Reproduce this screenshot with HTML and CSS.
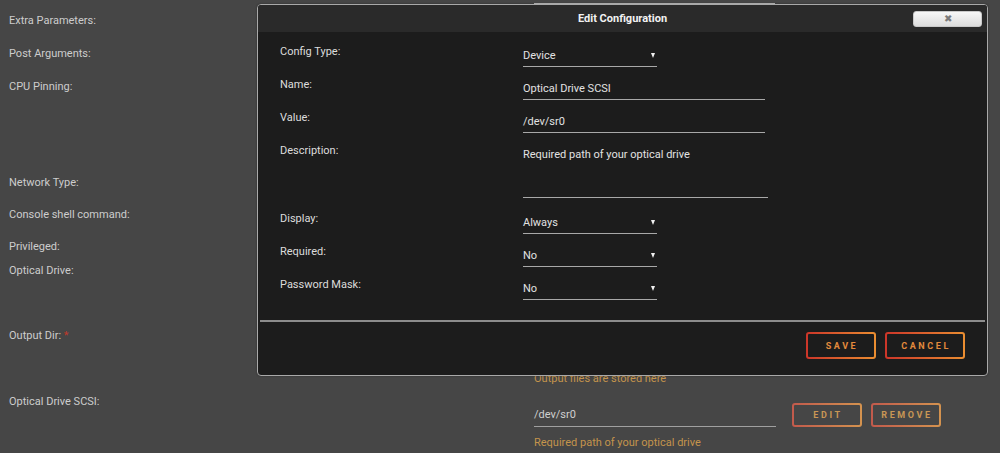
FILE: index.html
```html
<!DOCTYPE html>
<html lang="en">
<head>
  <meta charset="UTF-8" />
  <title>Edit Configuration</title>
  <link rel="stylesheet" href="styles.css">
</head>
<body>

  <div class="page">
    <div class="row row-stub"><span></span><div class="stub-line"></div></div>
    <div class="row"><label>Extra Parameters:</label></div>
    <div class="row"><label>Post Arguments:</label></div>
    <div class="row row-cpu"><label>CPU Pinning:</label></div>
    <div class="row row-32"><label>Network Type:</label></div>
    <div class="row row-32"><label>Console shell command:</label></div>
    <div class="row row-24"><label>Privileged:</label></div>
    <div class="row row-65"><label>Optical Drive:</label></div>
    <div class="row row-66">
      <label>Output Dir: <span class="req">*</span></label>
      <div class="value">
        <div class="hint hint-out">Output files are stored here</div>
      </div>
    </div>
    <div class="row">
      <label>Optical Drive SCSI:</label>
      <div class="value">
        <div class="inline">
          <div class="bg-input">/dev/sr0</div>
          <button class="btn btn-dim">EDIT</button>
          <button class="btn btn-dim">REMOVE</button>
        </div>
        <div class="hint">Required path of your optical drive</div>
      </div>
    </div>
  </div>

  <!-- dialog -->
  <div class="modal">
    <div class="modal-head">
      <span></span>
      <div class="modal-title">Edit Configuration</div>
      <button class="close-btn">&#x2716;</button>
    </div>

    <div class="modal-body">
      <div class="mrow">
        <label>Config Type:</label>
        <div class="field select w-134">Device</div>
      </div>
      <div class="mrow">
        <label>Name:</label>
        <div class="field w-242">Optical Drive SCSI</div>
      </div>
      <div class="mrow">
        <label>Value:</label>
        <div class="field w-242">/dev/sr0</div>
      </div>
      <div class="mrow mrow-desc">
        <label>Description:</label>
        <div class="field area w-245">Required path of your optical drive</div>
      </div>
      <div class="mrow">
        <label>Display:</label>
        <div class="field select w-134">Always</div>
      </div>
      <div class="mrow">
        <label>Required:</label>
        <div class="field select w-134">No</div>
      </div>
      <div class="mrow">
        <label>Password Mask:</label>
        <div class="field select w-134">No</div>
      </div>
    </div>

    <div class="modal-foot">
      <button class="btn btn-save">SAVE</button>
      <button class="btn btn-cancel">CANCEL</button>
    </div>
  </div>

</body>
</html>
```

FILE: styles.css
```css
:root {
  --font-sans: Roboto, 'Liberation Sans', sans-serif;
  --page-bg: #464646;
  --label: #cdcdcd;
  --hint: #c4944c;
  --modal-bg: #1c1c1c;
  --modal-head: #2a2a2a;
  --modal-text: #e2e2e2;
  --line: #a8a8a8;
}

body {
  margin: 0;
  font-family: var(--font-sans);
  font-size: 11px;
  background-color: var(--page-bg);
  color: var(--label);
  height: 453px;
  overflow: hidden;
}

/* page behind the dialog */
.page {
  padding-left: 9px;
}

.row {
  display: grid;
  grid-template-columns: 525px 1fr;
  height: 33px;
}

.row label {
  line-height: 20px;
  padding-top: 1px;
}

.row-stub { height: 10px; }
.row-cpu { height: 96px; }
.row-32 { height: 32px; }
.row-24 { height: 24px; }
.row-65 { height: 65px; }
.row-66 { height: 66px; }

.stub-line {
  width: 241px;
  margin-top: 3px;
  border-top: 1px solid #bdbdbd;
  height: 0;
}

.req {
  color: #c0392b;
}

.hint {
  color: var(--hint);
  line-height: 20px;
  margin-top: 6px;
}

.hint-out {
  margin-top: 44px;
}

.inline {
  display: flex;
  align-items: flex-start;
  margin-top: 11px;
}

.bg-input {
  width: 242px;
  height: 24px;
  line-height: 25px;
  border-bottom: 1px solid #a0a0a0;
  color: #d0d0d0;
  margin-right: 16px;
}

.btn {
  font-family: var(--font-sans);
  font-weight: bold;
  font-size: 9px;
  letter-spacing: 2.6px;
  padding: 0 0 0 2px;
  border: 2px solid transparent;
  border-radius: 3px;
  cursor: pointer;
}

.btn-dim {
  width: 70px;
  height: 24px;
  margin-top: 1px;
  margin-right: 9px;
  color: #c99755;
  background:
    linear-gradient(var(--page-bg), var(--page-bg)) padding-box,
    linear-gradient(90deg, #c25a4c, #d4934f) border-box;
}

/* dialog */
.modal {
  position: absolute;
  left: 257px;
  top: 4px;
  width: 729px;
  height: 370px;
  border: 1px solid #a9a9a9;
  border-radius: 4px;
  background-color: var(--modal-bg);
  color: var(--modal-text);
  box-shadow: 0 0 2px rgba(0, 0, 0, 0.4);
}

.modal-head {
  height: 27px;
  background-color: var(--modal-head);
  border-radius: 3px 3px 0 0;
  display: grid;
  grid-template-columns: 1fr auto 1fr;
  align-items: center;
}

.modal-title {
  font-weight: bold;
  color: #f2f2f2;
}

.close-btn {
  justify-self: end;
  margin-right: 5px;
  width: 69px;
  height: 16px;
  padding: 0;
  border: 1px solid #c9c9c9;
  border-radius: 3px;
  background: linear-gradient(#f7f7f7, #dcdcdc);
  color: #7a7a7a;
  font-size: 10px;
  line-height: 14px;
  cursor: pointer;
}

.modal-body {
  padding: 8px 0 0 20px;
  height: 280px;
  border-bottom: 2px solid #8c8c8c;
  margin: 0 2px;
}

.mrow {
  display: grid;
  grid-template-columns: 243px 1fr;
  height: 33px;
}

.mrow-desc {
  height: 68px;
}

.mrow label {
  line-height: 20px;
  padding-top: 2px;
  color: #dcdcdc;
}

.field {
  margin-top: 5px;
  height: 21px;
  line-height: 22px;
  border-bottom: 1px solid var(--line);
  color: var(--modal-text);
  position: relative;
}

.area {
  height: 53px;
}

.w-134 { width: 134px; }
.w-242 { width: 242px; }
.w-245 { width: 245px; }

.select::after {
  content: '';
  position: absolute;
  right: 2px;
  top: 8px;
  border-left: 2.5px solid transparent;
  border-right: 2.5px solid transparent;
  border-top: 5px solid #f0f0f0;
}

.modal-foot {
  display: flex;
  justify-content: flex-end;
  gap: 9px;
  padding: 10px 22px 0 0;
}

.btn-save,
.btn-cancel {
  height: 27px;
  color: #e38a3c;
  background:
    linear-gradient(var(--modal-bg), var(--modal-bg)) padding-box,
    linear-gradient(90deg, #cc3529, #ea8e31) border-box;
}

.btn-save { width: 70px; }
.btn-cancel { width: 80px; }
```
